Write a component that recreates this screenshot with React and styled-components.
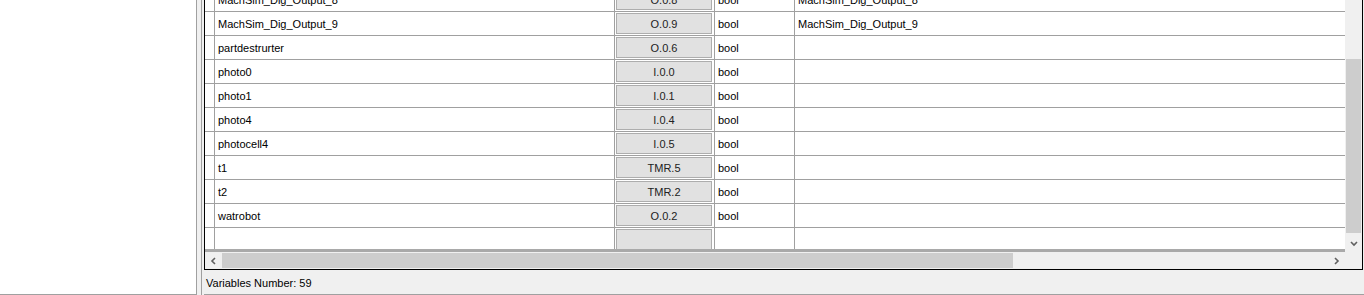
import React from "react";
import styled, { createGlobalStyle } from "styled-components";

const GlobalStyle = createGlobalStyle`
  html, body {
    margin: 0;
    padding: 0;
    background: #f0f0f0;
  }
  body {
    font-family: "Liberation Sans", Arial, sans-serif;
    font-size: 11px;
    color: #000;
  }
`;

const Window = styled.div`
  display: flex;
  width: 1364px;
  height: 295px;
  overflow: hidden;
  background: #f0f0f0;
`;

const LeftPane = styled.div`
  width: 197px;
  flex: none;
  background: #fff;
  border-right: 1px solid #a0a0a0;
  border-bottom: 1px solid #a0a0a0;
  box-sizing: border-box;
`;

const Splitter = styled.div`
  width: 4px;
  flex: none;
  background: #f0f0f0;
`;

const RightPane = styled.div`
  flex: 1;
  display: flex;
  flex-direction: column;
  min-width: 0;
  border-left: 1px solid #a0a0a0;
  padding-left: 2px;
`;

const GridFrame = styled.div`
  height: 270px;
  flex: none;
  display: flex;
  flex-direction: column;
  border: 1px solid #000;
  border-top: none;
  box-sizing: border-box;
  background: #fff;
  margin-right: 1px;
`;

const MainArea = styled.div`
  flex: 1;
  display: flex;
  min-height: 0;
`;

const Viewport = styled.div`
  flex: 1;
  min-width: 0;
  overflow: hidden;
  border-bottom: 3px solid #a9a9a9;
`;

const RowList = styled.div`
  margin-top: -12px;
`;

const Row = styled.div`
  display: flex;
  height: 24px;
  box-sizing: border-box;
  border-bottom: 1px solid #a0a0a0;
`;

const HeaderCell = styled.div`
  width: 10px;
  flex: none;
  border-right: 1px solid #a0a0a0;
  box-sizing: border-box;
`;

const Cell = styled.div`
  width: ${(p) => (p.$w ? `${p.$w}px` : "auto")};
  flex: ${(p) => (p.$w ? "none" : "1")};
  display: flex;
  align-items: center;
  padding-left: 3px;
  box-sizing: border-box;
  border-right: ${(p) => (p.$w ? "1px solid #a0a0a0" : "none")};
  white-space: nowrap;
  overflow: hidden;
  color: #000;
`;

const AddrCell = styled.div`
  width: 100px;
  flex: none;
  box-sizing: border-box;
  border-right: 1px solid #a0a0a0;
  padding: 1px 2px 1px 1px;
  display: flex;
`;

const AddrBox = styled.div`
  flex: 1;
  background: #e1e1e1;
  border: 1px solid #adadad;
  display: flex;
  align-items: center;
  justify-content: center;
  color: #222;
`;

const VScroll = styled.div`
  width: 17px;
  flex: none;
  display: flex;
  flex-direction: column;
  background: #f0f0f0;
`;

const VThumb = styled.div`
  margin: 59px 1px 2px 1px;
  flex: 1;
  background: #cdcdcd;
`;

const ArrowBtn = styled.div`
  width: 17px;
  height: 17px;
  flex: none;
  display: flex;
  align-items: center;
  justify-content: center;
`;

const HScrollRow = styled.div`
  height: 17px;
  flex: none;
  display: flex;
  background: #f0f0f0;
`;

const HTrack = styled.div`
  flex: 1;
  display: flex;
  align-items: stretch;
  padding: 1px 0;
`;

const HThumb = styled.div`
  width: 791px;
  background: #cdcdcd;
`;

const Corner = styled.div`
  width: 17px;
  flex: none;
`;

const StatusBar = styled.div`
  height: 25px;
  flex: none;
  box-sizing: border-box;
  border-bottom: 1px solid #a0a0a0;
  display: flex;
  align-items: center;
  padding-left: 2px;
  padding-top: 2px;
`;

const Chevron = ({ dir }) => {
  const paths = {
    left: "M5 1 L2 4 L5 7",
    right: "M2 1 L5 4 L2 7",
    down: "M1 2 L4 5 L7 2",
  };
  return (
    <svg width="8" height="8" viewBox="0 0 8 8">
      <path d={paths[dir]} fill="none" stroke="#606060" strokeWidth="1.6" />
    </svg>
  );
};

const rows = [
  ["MachSim_Dig_Output_8", "O.0.8", "bool", "MachSim_Dig_Output_8"],
  ["MachSim_Dig_Output_9", "O.0.9", "bool", "MachSim_Dig_Output_9"],
  ["partdestrurter", "O.0.6", "bool", ""],
  ["photo0", "I.0.0", "bool", ""],
  ["photo1", "I.0.1", "bool", ""],
  ["photo4", "I.0.4", "bool", ""],
  ["photocell4", "I.0.5", "bool", ""],
  ["t1", "TMR.5", "bool", ""],
  ["t2", "TMR.2", "bool", ""],
  ["watrobot", "O.0.2", "bool", ""],
  ["", "", "", ""],
];

const App = () => {
  return (
    <>
      <GlobalStyle />
      <Window>
        <LeftPane />
        <Splitter />
        <RightPane>
          <GridFrame>
            <MainArea>
              <Viewport>
                <RowList>
                  {rows.map((r, i) => (
                    <Row key={i}>
                      <HeaderCell />
                      <Cell $w={400}>{r[0]}</Cell>
                      <AddrCell>
                        <AddrBox>{r[1]}</AddrBox>
                      </AddrCell>
                      <Cell $w={80}>{r[2]}</Cell>
                      <Cell>{r[3]}</Cell>
                    </Row>
                  ))}
                </RowList>
              </Viewport>
              <VScroll>
                <VThumb />
                <ArrowBtn>
                  <Chevron dir="down" />
                </ArrowBtn>
              </VScroll>
            </MainArea>
            <HScrollRow>
              <ArrowBtn>
                <Chevron dir="left" />
              </ArrowBtn>
              <HTrack>
                <HThumb />
              </HTrack>
              <ArrowBtn>
                <Chevron dir="right" />
              </ArrowBtn>
              <Corner />
            </HScrollRow>
          </GridFrame>
          <StatusBar>Variables Number: 59</StatusBar>
        </RightPane>
      </Window>
    </>
  );
};

export default App;
